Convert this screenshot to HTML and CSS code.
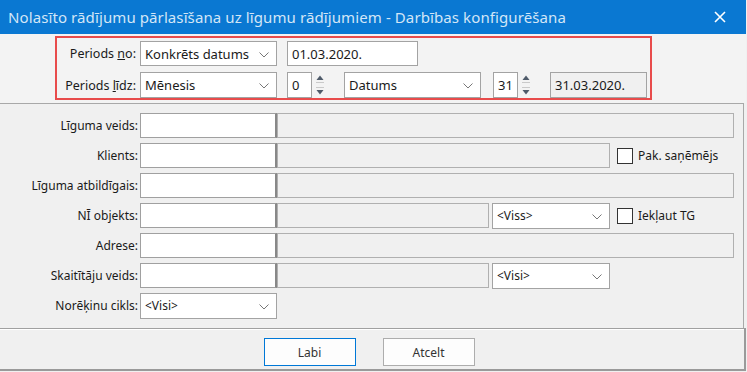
FILE: index.html
```html
<!DOCTYPE html>
<html lang="lv">
<head>
  <meta charset="UTF-8">
  <title>Darbības konfigurēšana</title>
  <link rel="stylesheet" href="styles.css">
</head>
<body>
  <div class="window">
    <div class="titlebar">
      <span class="title">Nolasīto rādījumu pārlasīšana uz līgumu rādījumiem - Darbības konfigurēšana</span>
      <svg class="close" width="12" height="12" viewBox="0 0 12 12"><path d="M1 1 L11 11 M11 1 L1 11" stroke="#fff" stroke-width="1.6"/></svg>
    </div>

    <!-- Perioda izvēle -->
    <div class="period-area">
      <div class="period-box">
        <div class="prow">
          <span class="plabel">Periods <u>n</u>o:</span>
          <div class="combo w137">Konkrēts datums<svg class="chev" width="10" height="6" viewBox="0 0 10 6"><path d="M0.5 0.5 L5 5 L9.5 0.5" fill="none" stroke="#777" stroke-width="1"/></svg></div>
          <div class="edit date">01.03.2020.</div>
        </div>
        <div class="prow second">
          <span class="plabel">Periods <u>l</u>īdz:</span>
          <div class="combo w137">Mēnesis<svg class="chev" width="10" height="6" viewBox="0 0 10 6"><path d="M0.5 0.5 L5 5 L9.5 0.5" fill="none" stroke="#777" stroke-width="1"/></svg></div>
          <div class="edit spin">0</div>
          <svg class="arrows" width="12" height="26" viewBox="0 0 12 26"><path d="M2.5 8 L6 3.5 L9.5 8 Z" fill="#4f5b6a"/><path d="M2 10.5 H10" stroke="#c9c9c9"/><path d="M2 15.5 H10" stroke="#c9c9c9"/><path d="M2.5 18 L6 22.5 L9.5 18 Z" fill="#4f5b6a"/></svg>
          <div class="combo w136 gap-l">Datums<svg class="chev" width="10" height="6" viewBox="0 0 10 6"><path d="M0.5 0.5 L5 5 L9.5 0.5" fill="none" stroke="#777" stroke-width="1"/></svg></div>
          <div class="edit spin gap-s">31</div>
          <svg class="arrows" width="12" height="26" viewBox="0 0 12 26"><path d="M2.5 8 L6 3.5 L9.5 8 Z" fill="#4f5b6a"/><path d="M2 10.5 H10" stroke="#c9c9c9"/><path d="M2 15.5 H10" stroke="#c9c9c9"/><path d="M2.5 18 L6 22.5 L9.5 18 Z" fill="#4f5b6a"/></svg>
          <div class="edit readonly">31.03.2020.</div>
        </div>
      </div>
    </div>

    <!-- Filtri -->
    <div class="fields">
      <div class="frow">
        <span class="flabel">Līguma veids:</span>
        <div class="code"></div>
        <div class="name full"></div>
      </div>
      <div class="frow">
        <span class="flabel">Klients:</span>
        <div class="code"></div>
        <div class="name w333"></div>
        <span class="check"></span><span class="clabel">Pak. saņēmējs</span>
      </div>
      <div class="frow">
        <span class="flabel">Līguma atbildīgais:</span>
        <div class="code"></div>
        <div class="name full"></div>
      </div>
      <div class="frow">
        <span class="flabel">NĪ objekts:</span>
        <div class="code"></div>
        <div class="name w212"></div>
        <div class="combo small w118">&lt;Viss&gt;<svg class="chev" width="10" height="6" viewBox="0 0 10 6"><path d="M0.5 0.5 L5 5 L9.5 0.5" fill="none" stroke="#777" stroke-width="1"/></svg></div>
        <span class="check"></span><span class="clabel">Iekļaut TG</span>
      </div>
      <div class="frow">
        <span class="flabel">Adrese:</span>
        <div class="code"></div>
        <div class="name full"></div>
      </div>
      <div class="frow">
        <span class="flabel">Skaitītāju veids:</span>
        <div class="code"></div>
        <div class="name w212"></div>
        <div class="combo small w118">&lt;Visi&gt;<svg class="chev" width="10" height="6" viewBox="0 0 10 6"><path d="M0.5 0.5 L5 5 L9.5 0.5" fill="none" stroke="#777" stroke-width="1"/></svg></div>
      </div>
      <div class="frow">
        <span class="flabel">Norēķinu cikls:</span>
        <div class="combo small w137">&lt;Visi&gt;<svg class="chev" width="10" height="6" viewBox="0 0 10 6"><path d="M0.5 0.5 L5 5 L9.5 0.5" fill="none" stroke="#777" stroke-width="1"/></svg></div>
      </div>
    </div>

    <div class="buttons">
      <button class="btn default">Labi</button>
      <button class="btn">Atcelt</button>
    </div>
  </div>
</body>
</html>
```

FILE: styles.css
```css
/* Reset */
* {
  margin: 0;
  padding: 0;
  box-sizing: border-box;
}

body {
  font-family: "Noto Sans", "Open Sans", sans-serif;
  font-size: 12px;
  color: #1a1a1a;
  background: #f0f0f0;
  width: 747px;
  height: 372px;
  overflow: hidden;
}

.window {
  width: 746px;
  height: 371px;
  background: #f0f0f0;
  display: flex;
  flex-direction: column;
}

/* Title bar */
.titlebar {
  height: 34px;
  background: #0a78d2;
  display: flex;
  align-items: center;
  justify-content: space-between;
  padding: 0 20px 0 8px;
}

.title {
  color: #d3e6f7;
  font-size: 15px;
  letter-spacing: 0.1px;
}

/* Period block */
.period-area {
  height: 69px;
  padding: 2px 0 0 55px;
  background: #f3f3f3;
}

.period-box {
  width: 597px;
  height: 64px;
  border: 2px solid #e84b4b;
  padding-top: 3px;
}

.prow {
  display: flex;
  align-items: center;
  height: 25px;
}

.prow.second {
  margin-top: 6px;
  height: 26px;
}

.plabel {
  width: 83px;
  text-align: right;
  padding-right: 4px;
  font-size: 12.5px;
}

.combo {
  position: relative;
  height: 100%;
  background: #fff;
  border: 1px solid #a3a3a3;
  padding-left: 4px;
  display: flex;
  align-items: center;
  font-size: 13px;
}

.combo .chev {
  position: absolute;
  right: 7px;
  top: 10px;
}

.combo.small {
  font-size: 12px;
  height: 26px;
}

.w137 { width: 137px; }
.w136 { width: 137px; }
.w118 { width: 118px; }

.edit {
  height: 100%;
  background: #fff;
  border: 1px solid #a3a3a3;
  padding-left: 4px;
  display: flex;
  align-items: center;
  font-size: 13px;
}

.date {
  width: 131px;
  margin-left: 10px;
}

.spin {
  width: 25px;
  margin-left: 10px;
}

.spin.gap-s {
  margin-left: 12px;
}

.arrows {
  margin-left: 2px;
}

.gap-l {
  margin-left: 18px;
}

.readonly {
  width: 97px;
  margin-left: 18px;
  background: #f0f0f0;
}

/* Filters */
.fields {
  height: 225px;
  width: 744px;
  border-top: 1px solid #a8a8a8;
  border-right: 1px solid #a8a8a8;
  padding-top: 9px;
  display: flex;
  flex-direction: column;
  gap: 5px;
}

.frow {
  display: flex;
  align-items: center;
  height: 25px;
}

.flabel {
  width: 140px;
  text-align: right;
  padding-right: 2px;
}

.code {
  width: 137px;
  height: 100%;
  background: #fff;
  border: 1px solid #a0a0a0;
  border-right: 2px solid #888;
}

.name {
  height: 100%;
  background: #f0f0f0;
  border: 1px solid #b0b0b0;
  margin-right: 3px;
}

.name.full { width: 457px; }
.w333 { width: 333px; }
.w212 { width: 212px; }

.check {
  width: 16px;
  height: 16px;
  background: #fff;
  border: 1px solid #333;
  margin-left: 4px;
}

.frow .combo.small + .check {
  margin-left: 7px;
}

.clabel {
  margin-left: 5px;
}

/* Buttons */
.buttons {
  flex: 1;
  border-top: 1px solid #a0a0a0;
  box-shadow: inset 0 1px 0 #fff;
  border-right: 2px solid #9a9a9a;
  border-bottom: 2px solid #9a9a9a;
  display: flex;
  justify-content: center;
  align-items: flex-start;
  padding-top: 9px;
  padding-right: 6px;
  gap: 27px;
}

.btn {
  width: 92px;
  height: 28px;
  background: #fdfdfd;
  border: 1px solid #adadad;
  font-family: "Noto Sans", "Open Sans", sans-serif;
  font-size: 12px;
  color: #333;
}

.btn.default {
  border: 1px solid #0078d7;
}
```
